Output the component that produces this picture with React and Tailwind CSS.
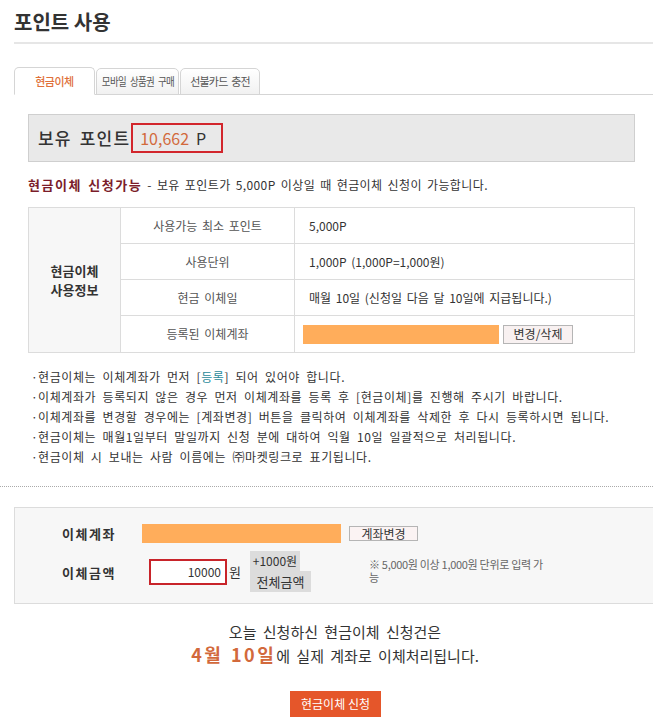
import React from 'react';

const font = "font-['Noto_Sans_CJK_KR','Noto_Sans',sans-serif]";

const infoRows = [
  { label: '사용가능 최소 포인트', value: '5,000P' },
  { label: '사용단위', value: '1,000P (1,000P=1,000원)' },
  { label: '현금 이체일', value: '매월 10일 (신청일 다음 달 10일에 지급됩니다.)' },
];

const notes = [
  <>현금이체는 이체계좌가 먼저 [<span className="text-[#2a8a9a]">등록</span>] 되어 있어야 합니다.</>,
  <>이체계좌가 등록되지 않은 경우 먼저 이체계좌를 등록 후 [현금이체]를 진행해 주시기 바랍니다.</>,
  <>이체계좌를 변경할 경우에는 [계좌변경] 버튼을 클릭하여 이체계좌를 삭제한 후 다시 등록하시면 됩니다.</>,
  <>현금이체는 매월1일부터 말일까지 신청 분에 대하여 익월 10일 일괄적으로 처리됩니다.</>,
  <>현금이체 시 보내는 사람 이름에는 ㈜마켓링크로 표기됩니다.</>,
];

const App = () => {
  return (
    <div className={`w-[653px] h-[724px] overflow-hidden bg-white text-[#333] ${font}`}>
      {/* Title */}
      <div className="ml-[14px] pt-[8px] pb-[6px] border-b-2 border-[#e6e6e6]">
        <h1 className="text-[20px] leading-[28px] font-bold text-[#333]">포인트 사용</h1>
      </div>

      {/* Tabs */}
      <div className="mt-[23px] ml-[14px] flex items-end border-b border-[#d5d5d5] h-[28px] whitespace-nowrap">
        <div className="w-[81px] h-[28px] -mb-px flex items-center justify-center bg-white border border-[#d5d5d5] border-b-white rounded-t-[5px] text-[11px] tracking-[-0.5px] text-[#e0703a] font-medium">
          현금이체
        </div>
        <div className="w-[83px] h-[27px] -mb-px ml-[1px] flex items-center justify-center bg-gradient-to-b from-white to-[#f1f1f1] border border-[#d5d5d5] rounded-t-[5px] text-[11px] text-[#555]">
          <span className="inline-block tracking-[-0.8px] [word-spacing:3px] scale-x-[0.86]">모바일 상품권 구매</span>
        </div>
        <div className="w-[80px] h-[27px] -mb-px ml-[1px] flex items-center justify-center bg-gradient-to-b from-white to-[#f1f1f1] border border-[#d5d5d5] rounded-t-[5px] text-[11px] tracking-[-0.8px] [word-spacing:2px] text-[#555]">
          선불카드 충전
        </div>
      </div>

      {/* Content */}
      <div className="mx-[28px] w-[607px]">
        {/* Points */}
        <div className="mt-[19px] h-[48px] bg-[#e9e9e9] border border-[#cfcfcf] flex items-center pl-[9px]">
          <span className="text-[17px] font-medium tracking-[1.2px] text-[#333] [word-spacing:3px]">보유 포인트</span>
          <span className="ml-[1px] h-[30px] pl-[7px] pr-[15px] flex items-center border-2 border-[#d2262c] text-[16px]">
            <span className="text-[#d2693c]">10,662</span>
            <span className="ml-[7px] text-[#333]">P</span>
          </span>
        </div>

        {/* Notice */}
        <p className="mt-[14px] text-[12px] leading-[18px] [word-spacing:2px]">
          <span className="font-bold text-[#7b1d2a] text-[13px] tracking-[1.5px]">현금이체 신청가능</span>
          <span className="text-[#333] tracking-[0.4px]"> - 보유 포인트가 5,000P 이상일 때 현금이체 신청이 가능합니다.</span>
        </p>

        {/* Info table */}
        <div className="mt-[13px] flex border border-[#dcdcdc] text-[12px] [word-spacing:2px]">
          <div className="w-[92px] shrink-0 bg-[#f7f7f7] border-r border-[#dcdcdc] flex items-center justify-center text-center text-[13px] font-bold leading-[19px] text-[#333]">
            현금이체<br />사용정보
          </div>
          <div className="flex-1">
            {infoRows.map((row) => (
              <div key={row.label} className="flex h-[36px] border-b border-[#dcdcdc]">
                <div className="w-[174px] shrink-0 border-r border-[#dcdcdc] flex items-center justify-center text-[#555]">
                  {row.label}
                </div>
                <div className="flex-1 flex items-center pl-[14px] text-[#333]">{row.value}</div>
              </div>
            ))}
            <div className="flex h-[36px]">
              <div className="w-[174px] shrink-0 border-r border-[#dcdcdc] flex items-center justify-center text-[#555]">
                등록된 이체계좌
              </div>
              <div className="flex-1 flex items-center pl-[8px]">
                <div className="w-[196px] h-[19px] bg-[#ffad5b]" />
                <button className="ml-[4px] w-[70px] h-[19px] bg-[#f8f1f1] border border-[#b5b5b5] text-[12px] text-[#333] leading-none">
                  변경/삭제
                </button>
              </div>
            </div>
          </div>
        </div>

        {/* Notes */}
        <ul className="mt-[14px] ml-[3px] text-[12px] leading-[20px] text-[#333] tracking-[0.6px] [word-spacing:3px]">
          {notes.map((n, i) => (
            <li key={i} className="flex">
              <span className="w-[7px] shrink-0">·</span>
              <span>{n}</span>
            </li>
          ))}
        </ul>
      </div>

      {/* Divider */}
      <div className="mt-[19px] border-t border-dotted border-[#aaa]" />

      {/* Transfer form */}
      <div className="mt-[20px] ml-[14px] h-[97px] bg-[#f7f7f7] border border-[#dcdcdc] border-r-0 pt-[16px]">
        <div className="flex items-center h-[19px]">
          <span className="ml-[47px] w-[80px] text-[13px] font-bold text-[#333] [letter-spacing:1.5px]">이체계좌</span>
          <div className="w-[199px] h-[19px] bg-[#ffad5b]" />
          <button className="ml-[8px] w-[69px] h-[15px] bg-[#fbf3f3] border border-[#b5b5b5] text-[12px] leading-none text-[#333]">
            계좌변경
          </button>
        </div>
        <div className="mt-[8px] flex items-start">
          <span className="ml-[47px] mt-[12px] w-[87px] text-[13px] font-bold text-[#333] [letter-spacing:1.5px]">이체금액</span>
          <div className="mt-[8px] w-[78px] h-[26px] border-2 border-[#c8242a] bg-white flex items-center justify-end pr-[4px] text-[12px] text-[#333]">
            10000
          </div>
          <span className="mt-[11px] ml-[2px] text-[13px] text-[#333]">원</span>
          <div className="ml-[9px] flex flex-col">
            <button className="w-[50px] h-[20px] bg-[#dcdcdc] text-[12px] text-[#333] leading-none">+1000원</button>
            <button className="w-[61px] h-[21px] bg-[#dcdcdc] text-[13px] text-[#333] leading-none">전체금액</button>
          </div>
          <p className="ml-[58px] mt-[7px] w-[178px] text-[11px] leading-[13px] text-[#666] break-all tracking-[-0.3px]">
            ※ 5,000원 이상 1,000원 단위로 입력 가능
          </p>
        </div>
      </div>

      {/* Summary */}
      <div className="mt-[16px] pl-[17px] text-center text-[15px] leading-[23px] text-[#333] [word-spacing:3px]">
        <p>오늘 신청하신 현금이체 신청건은</p>
        <p>
          <span className="font-bold text-[#d2693c] text-[18px] tracking-[2.5px] [word-spacing:1px]">4월 10일</span>에 실제 계좌로 이체처리됩니다.
        </p>
      </div>

      <div className="mt-[24px] pl-[18px] flex justify-center">
        <button className="w-[91px] h-[26px] bg-[#e5562a] text-white text-[12px] leading-none">현금이체 신청</button>
      </div>
    </div>
  );
};

export default App;
